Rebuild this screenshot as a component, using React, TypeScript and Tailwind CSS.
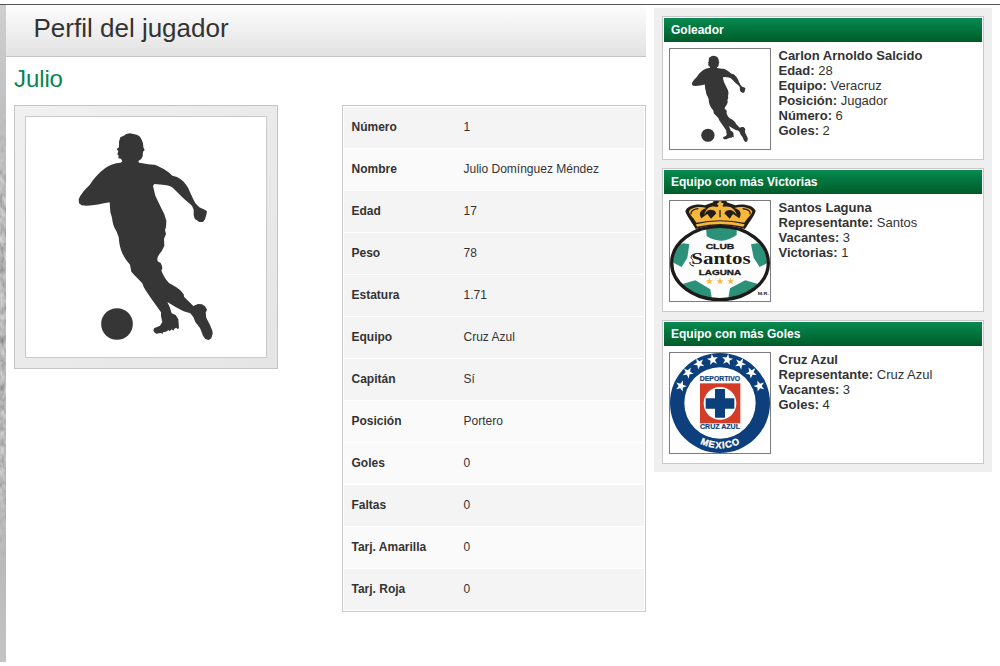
import type { ReactNode } from "react";

const details = [
  { label: "Número", value: "1", light: false },
  { label: "Nombre", value: "Julio Domínguez Méndez", light: true },
  { label: "Edad", value: "17", light: false },
  { label: "Peso", value: "78", light: false },
  { label: "Estatura", value: "1.71", light: false },
  { label: "Equipo", value: "Cruz Azul", light: false },
  { label: "Capitán", value: "Sí", light: false },
  { label: "Posición", value: "Portero", light: true },
  { label: "Goles", value: "0", light: true },
  { label: "Faltas", value: "0", light: false },
  { label: "Tarj. Amarilla", value: "0", light: true },
  { label: "Tarj. Roja", value: "0", light: false },
];

function PlayerSilhouette({ className }: { className: string }) {
  return (
    <svg viewBox="-132 -9 720 720" className={className} fill="#363636">
      <path d="M151 52 L161 47 L169 42 L180 40 L191 42 L202 45 L210 50 L215 59 L219 70 L220 82 L224 90 L219 95 L218 109 L213 118 L205 123 L207 128 C221 129 237 134 253 134 C272 140 294 153 307 167 L321 171 C335 177 347 190 355 205 C362 221 368 235 376 250 L388 262 L404 269 L411 274 L409 284 L405 298 L399 306 L388 306 L374 296 L371 286 L371 269 L366 257 C351 244 338 235 328 223 L312 207 C305 198 294 196 278 194 L253 192 L249 198 L256 227 L271 259 L283 283 L289 302 L288 321 L285 330 L288 342 L282 356 L283 377 L278 388 C273 400 263 405 262 417 L263 424 L272 429 L276 438 L277 446 L274 451 C278 464 286 478 297 489 L318 501 L331 511 L341 523 L342 530 L370 558 L384 552 L396 553 L405 559 L411 569 L407 578 L409 594 L419 613 L427 632 L428 641 L424 655 L416 660 L406 657 L399 647 L390 624 L376 606 L370 591 L361 580 L341 574 L318 562 L292 546 L299 561 L305 580 L317 585 L325 598 L327 625 L322 627 L319 623 L313 626 L310 632 L305 628 L299 634 L296 630 L288 635 L279 637 L278 642 L273 639 L267 640 L260 641 L255 639 L250 632 L252 625 L270 617 L277 606 L273 589 L273 577 C264 562 251 547 242 533 C231 516 221 506 217 490 L195 467 L184 455 L180 434 L168 419 C157 403 151 388 148 369 L146 351 L139 333 C130 320 127 304 126 293 L121 276 L119 247 C91 252 61 260 35 256 L27 250 L26 238 C32 222 44 210 59 195 C70 176 86 159 103 146 C118 135 134 129 152 128 L157 124 L153 116 L145 115 L146 107 L142 103 L145 94 L140 87 L147 82 L147 65 Z" />
      <circle cx="141" cy="612" r="47.5" />
    </svg>
  );
}

function SantosLogo() {
  return (
    <svg viewBox="30 108 300 300" className="size-[100px]">
      <ellipse cx="180" cy="294" rx="147" ry="113" fill="#fdfdfd" />
      <clipPath id="santos-ball">
        <ellipse cx="180" cy="294" rx="141" ry="107" />
      </clipPath>
      <g clipPath="url(#santos-ball)" fill="#2b9178">
        <path d="M138 184 H230 V210 Q208 226 184 227 Q158 226 140 213 Z" />
        <path d="M35 250 L70 235 L88 238 L82 278 L65 306 L35 290 Z" />
        <path d="M330 250 L292 235 L273 238 L281 278 L299 306 L330 290 Z" />
        <path d="M70 356 L106 346 L151 373 L157 410 H70 Z" />
        <path d="M292 356 L256 346 L210 370 L203 410 H292 Z" />
      </g>
      <ellipse cx="180" cy="294" rx="145" ry="110" fill="none" stroke="#1d1b1a" strokeWidth="10" />
      <path d="M107 192 C93 168 80 153 76 139 C81 121 112 115 135 121 L160 112 V106 H200 V112 L226 121 C249 115 281 121 287 138 C282 155 270 168 255 192 C210 178 151 178 107 192 Z" fill="#231d17" />
      <path d="M109 173 C101 158 88 149 87 140 C92 127 119 123 139 129 C116 137 117 148 124 160 L142 147 L153 161 L169 145 L164 137 C148 131 139 136 133 150 C137 126 155 121 173 126 L176 119 H187 L190 126 C209 121 225 130 230 150 C222 135 209 132 198 138 L193 145 L209 161 L219 147 L238 160 C246 146 242 134 223 129 C243 123 271 127 277 140 C274 150 263 157 253 173 Q181 158 109 173 Z" fill="#f6b73c" />
      <path d="M108 178 Q181 160 254 178 L250 185 Q181 169 111 185 Z" fill="#f6b73c" />
      <path d="M176 109 H184 V127 H176 Z M172 114 H190 V120 H172 Z" fill="#f6b73c" />
      <path d="M93 148 Q91 133 115 131 M270 148 Q274 134 248 131 M180 135 V157" fill="none" stroke="#231d17" strokeWidth="4" />
      <g fill="#1d1b1a" textAnchor="middle" fontFamily="Liberation Sans, sans-serif" fontWeight="700">
        <text x="180" y="252" fontSize="24" textLength="86" lengthAdjust="spacingAndGlyphs" stroke="#1d1b1a">CLUB</text>
        <text x="183" y="298" fontFamily="Liberation Serif, serif" fontSize="52" textLength="178" lengthAdjust="spacingAndGlyphs">Santos</text>
        <text x="180" y="330" fontSize="22" textLength="127" lengthAdjust="spacingAndGlyphs" stroke="#1d1b1a">LAGUNA</text>
        <text x="310" y="390" fontSize="12" textLength="34" lengthAdjust="spacingAndGlyphs">M.R.</text>
      </g>
      <path d="M98 268 Q88 277 98 284 M90 291 Q88 301 102 303" fill="none" stroke="#1d1b1a" strokeWidth="3" />
      <g fill="#f6b73c">
        {[148, 180, 212].map((x) => (
          <path key={x} transform={`translate(${x} 349) scale(11)`} d="M0-1 .24-.32 .95-.31 .38 .12 .59 .81 0 .4-.59 .81-.38 .12-.95-.31-.24-.32Z" />
        ))}
      </g>
    </svg>
  );
}

const crestStars = [
  [63, 213], [84, 173], [117, 146], [158, 134],
  [202, 134], [241, 146], [274, 173], [298, 213],
];

function CruzAzulLogo() {
  return (
    <svg viewBox="30 114 300 300" className="size-[100px]">
      <circle cx="180" cy="264" r="150" fill="#0c3f7c" />
      <circle cx="180" cy="264" r="107" fill="#fff" />
      <rect x="120" y="205" width="121" height="120" fill="#d33d27" />
      <circle cx="180" cy="265" r="49" fill="#fff" />
      <path d="M165 222 H195 V250 H223 V281 H195 V308 H165 V281 H137 V250 H165 Z" fill="#0c3f7c" />
      <g fill="#fff">
        {crestStars.map(([x, y]) => (
          <path key={x} transform={`translate(${x} ${y}) rotate(${(x - 180) * 0.45}) scale(17.5)`} d="M0-1 .24-.32 .95-.31 .38 .12 .59 .81 0 .4-.59 .81-.38 .12-.95-.31-.24-.32Z" />
        ))}
      </g>
      <g fontFamily="Liberation Sans, sans-serif" fontWeight="700" textAnchor="middle">
        <text x="180" y="199" fontSize="20" fill="#0c3f7c" stroke="#0c3f7c" strokeWidth=".6" textLength="121" lengthAdjust="spacingAndGlyphs">DEPORTIVO</text>
        <text x="180" y="343" fontSize="20" fill="#0c3f7c" stroke="#0c3f7c" strokeWidth=".6" textLength="120" lengthAdjust="spacingAndGlyphs">CRUZ AZUL</text>
        <path id="crest-arc" d="M44 264 A136 136 0 0 0 316 264" fill="none" />
        <text fontSize="28" fill="#fff" stroke="#fff" strokeWidth="1">
          <textPath href="#crest-arc" startOffset="50%" textLength="124">MEXICO</textPath>
        </text>
      </g>
    </svg>
  );
}

type CardProps = { title: string; name: string; picture: ReactNode; facts: [string, string][] };

function Card({ title, name, picture, facts }: CardProps) {
  return (
    <section className="h-36 border border-[#c9c9c9] bg-white p-px">
      <h3 className="h-6 bg-linear-to-b from-[#078a50] to-[#005c29] pl-[7px] text-xs leading-6 font-bold text-white">{title}</h3>
      <div className="flex gap-[7.5px] pt-1.5 pl-[5px]">
        <div className="size-[102px] shrink-0 border border-[#7d7d7d]">{picture}</div>
        <div className="text-[13px] leading-[15px]">
          <div className="font-bold">{name}</div>
          {facts.map(([label, value]) => (
            <div key={label}><b>{label}:</b> {value}</div>
          ))}
        </div>
      </div>
    </section>
  );
}

export default function App() {
  return (
    <div className="h-[666px] w-[1000px] overflow-hidden bg-white font-['Liberation_Sans',Arial,sans-serif] text-[#333]">
      <div className="h-[662px] border-t-4 border-white">
        <div className="flex h-[658px] border-t border-[#555]">
          <div className="w-1.5 shrink-0 bg-linear-to-b from-[#cfcfcf] via-[#a3a3a3] to-[#c4c4c4]">
            <svg viewBox="0 0 6 657" className="h-[657px] w-1.5">
              <defs>
                <filter id="grass" x="0" y="0" width="100%" height="100%">
                  <feTurbulence type="fractalNoise" baseFrequency=".2 .13" numOctaves="3" seed="8" />
                  <feColorMatrix type="saturate" values="0" />
                  <feComponentTransfer>
                    <feFuncR type="linear" slope="1.2" intercept="-.08" />
                    <feFuncG type="linear" slope="1.2" intercept="-.08" />
                    <feFuncB type="linear" slope="1.2" intercept="-.08" />
                    <feFuncA type="linear" slope="0" intercept="1" />
                  </feComponentTransfer>
                </filter>
                <linearGradient id="fade" x2="0" y2="1">
                  <stop offset=".15" stopColor="#000" />
                  <stop offset=".3" stopColor="#aaa" />
                  <stop offset=".7" stopColor="#aaa" />
                  <stop offset=".86" stopColor="#000" />
                </linearGradient>
                <mask id="strip"><rect width="6" height="657" fill="url(#fade)" /></mask>
              </defs>
              <g mask="url(#strip)"><rect width="6" height="657" filter="url(#grass)" /></g>
            </svg>
          </div>
          <main className="w-[640px] shrink-0">
            <h1 className="h-[52px] border-b border-[#c5c5c5] bg-linear-to-b from-[#fdfdfd] to-[#e2e2e2] pl-[27.5px] text-[26px] leading-[46px]">Perfil del jugador</h1>
            <div className="pl-2">
              <h2 className="h-12 text-2xl leading-[44px] tracking-[-0.1px] text-[#078553]">Julio</h2>
              <div className="flex items-start gap-16">
                <div className="size-[264px] shrink-0 border border-[#c4c4c4] bg-linear-to-br from-[#f0f0f0] to-[#e5e5e5] p-2.5">
                  <div className="size-[242px] border border-[#c9c9c9] bg-white">
                    <PlayerSilhouette className="size-60" />
                  </div>
                </div>
                <dl className="flex w-[304px] flex-col gap-px border border-[#c9c9c9] p-px text-xs">
                  {details.map(({ label, value, light }) => (
                    <div key={label} className={`flex h-[41px] pl-[7.5px] leading-10 ${light ? "bg-[#fafafa]" : "bg-[#f4f4f4]"}`}>
                      <dt className="w-28 font-bold">{label}</dt>
                      <dd>{value}</dd>
                    </div>
                  ))}
                </dl>
              </div>
            </div>
          </main>
          <aside className="mt-[3px] ml-2 flex h-[464px] w-[338px] flex-col gap-2 bg-[#efefef] p-2">
            <Card
              title="Goleador"
              name="Carlon Arnoldo Salcido"
              picture={<PlayerSilhouette className="size-[100px]" />}
              facts={[["Edad", "28"], ["Equipo", "Veracruz"], ["Posición", "Jugador"], ["Número", "6"], ["Goles", "2"]]}
            />
            <Card
              title="Equipo con más Victorias"
              name="Santos Laguna"
              picture={<SantosLogo />}
              facts={[["Representante", "Santos"], ["Vacantes", "3"], ["Victorias", "1"]]}
            />
            <Card
              title="Equipo con más Goles"
              name="Cruz Azul"
              picture={<CruzAzulLogo />}
              facts={[["Representante", "Cruz Azul"], ["Vacantes", "3"], ["Goles", "4"]]}
            />
          </aside>
        </div>
      </div>
    </div>
  );
}
